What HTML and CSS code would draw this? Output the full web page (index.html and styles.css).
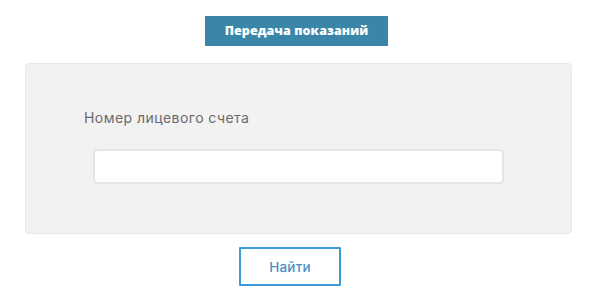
FILE: index.html
```html
<!DOCTYPE html>
<html lang="ru">
<head>
<meta charset="utf-8">
<link rel="stylesheet" href="styles.css">
</head>
<body>
<div class="page">
  <div class="title">Передача показаний</div>
  <div class="panel">
    <label class="label" for="acc">Номер лицевого счета</label>
    <input class="field" id="acc" type="text">
  </div>
  <button class="find" type="button">Найти</button>
</div>
</body>
</html>
```
FILE: styles.css
```css
html, body {
  margin: 0;
  padding: 0;
  background: #ffffff;
}
.page {
  width: 547px;
  margin-left: 25px;
  padding-top: 16px;
  display: flex;
  flex-direction: column;
  align-items: flex-start;
  font-family: Inter, "Open Sans", sans-serif;
}
.title {
  margin-left: 180px;
  width: 183px;
  height: 30px;
  background: #3a86a8;
  color: #ffffff;
  font-family: "Open Sans", sans-serif;
  font-weight: 800;
  font-size: 12.5px;
  line-height: 30px;
  text-align: center;
  letter-spacing: 0.1px;
}
.panel {
  margin-top: 17px;
  box-sizing: border-box;
  width: 547px;
  height: 171px;
  background: #f2f2f2;
  border: 1px solid #e8e8e8;
  border-radius: 4px;
  padding: 44px 0 0 58px;
  display: flex;
  flex-direction: column;
  align-items: flex-start;
}
.label {
  font-size: 14px;
  line-height: 20px;
  color: #6a6a6a;
  font-weight: 400;
  letter-spacing: 0.45px;
}
.field {
  margin-top: 21px;
  margin-left: 9px;
  box-sizing: border-box;
  width: 411px;
  height: 35px;
  background: #ffffff;
  border: 2px solid #e6e6e6;
  border-radius: 4px;
  outline: none;
}
.find {
  margin-top: 13px;
  margin-left: 214px;
  box-sizing: border-box;
  width: 102px;
  height: 39px;
  background: #ffffff;
  border: 2px solid #3c9ad6;
  border-radius: 1px;
  color: #4a8fc4;
  font-family: Inter, sans-serif;
  font-size: 13.5px;
  font-weight: 500;
  letter-spacing: 0.2px;
  padding: 0;
}
```
